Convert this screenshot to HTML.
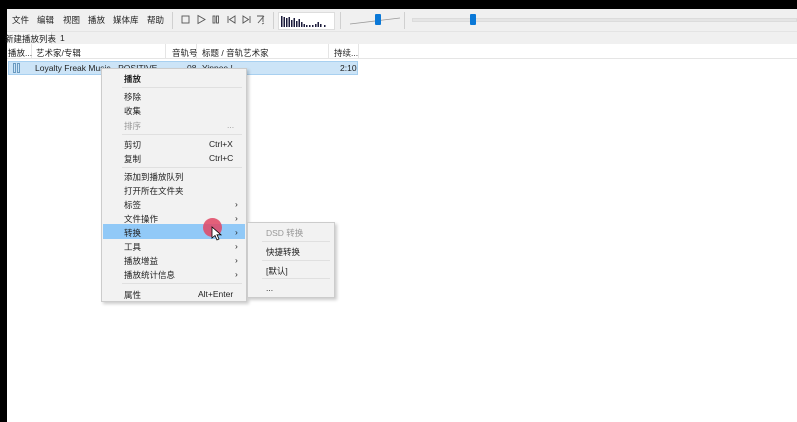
<!DOCTYPE html>
<html><head><meta charset="utf-8"><style>
*{margin:0;padding:0;box-sizing:border-box}
body{width:797px;height:422px;overflow:hidden;background:#fff;position:relative;font-family:"Liberation Sans","Noto Sans CJK SC",sans-serif;font-size:8.5px;color:#222}
.a{position:absolute;white-space:nowrap}
.sep{position:absolute;width:1px;background:#d0d0d0}
.mi{position:absolute;left:22px;font-size:8.5px}
.hl{position:absolute;height:1px;background:#e0e0e0}
</style></head><body>
<div class="a" style="left:0;top:0;width:797px;height:9px;background:#000"></div>
<div class="a" style="left:0;top:0;width:7px;height:422px;background:#000"></div>
<div class="a" style="left:7px;top:9px;width:790px;height:22px;background:#f0f0f0"></div>
<div class="a" style="left:7px;top:31px;width:790px;height:13px;background:#f0f0f0;border-top:1px solid #e4e4e4"></div>
<div class="a" style="left:12px;top:14px">文件</div>
<div class="a" style="left:37px;top:14px">编辑</div>
<div class="a" style="left:63px;top:14px">视图</div>
<div class="a" style="left:88px;top:14px">播放</div>
<div class="a" style="left:113px;top:14px">媒体库</div>
<div class="a" style="left:147px;top:14px">帮助</div>
<div class="sep" style="left:172px;top:12px;height:17px"></div>
<svg class="a" style="left:178px;top:12px" width="95" height="16" viewBox="0 0 95 16" fill="none" stroke="#555" stroke-width="0.9">
<rect x="4" y="4" width="7" height="7"/>
<path d="M20 3.5 L27 7.5 L20 11.5 Z"/>
<rect x="35" y="4" width="2" height="7"/><rect x="38.5" y="4" width="2" height="7"/>
<path d="M50 4 V11 M57 4 L51.5 7.5 L57 11 Z"/>
<path d="M72 4 V11 M65 4 L70.5 7.5 L65 11 Z"/>
<path d="M79 4 L85 4 L85 10 M80 11 L86 4 M84 12 l2 -1"/>
</svg>
<div class="sep" style="left:273px;top:12px;height:17px"></div>
<div class="a" style="left:278px;top:12px;width:57px;height:18px;background:#fff;border:1px solid #ddd"></div>
<svg class="a" style="left:281px;top:15px" width="52" height="13" viewBox="0 0 52 13" fill="#1a1a3a">
<rect x="0" y="1" width="1.5" height="11"/><rect x="2.5" y="2" width="1.5" height="10"/><rect x="5" y="3" width="1.5" height="9"/><rect x="7.5" y="2" width="1.5" height="10"/><rect x="10" y="5" width="1.5" height="7"/><rect x="12.5" y="3" width="1.5" height="9"/><rect x="15" y="6" width="1.5" height="6"/><rect x="17.5" y="4" width="1.5" height="8"/><rect x="20" y="7" width="1.5" height="5"/><rect x="22.5" y="9" width="1.5" height="3"/><rect x="25" y="10" width="1.5" height="2"/><rect x="28" y="10" width="1.5" height="2"/><rect x="31" y="10" width="1.5" height="2"/><rect x="34" y="9" width="1.5" height="3"/><rect x="36.5" y="7" width="1.5" height="5"/><rect x="39" y="9" width="1.5" height="3"/><rect x="43" y="10" width="1.5" height="2"/>
</svg>
<div class="sep" style="left:340px;top:12px;height:17px"></div>
<svg class="a" style="left:348px;top:12px" width="55" height="16"><path d="M2 12 L52 6" stroke="#999" stroke-width="0.8"/></svg>
<div class="a" style="left:375px;top:14px;width:6px;height:11px;background:#0a78d7;border-radius:1px"></div>
<div class="sep" style="left:404px;top:12px;height:17px"></div>
<div class="a" style="left:412px;top:18px;width:385px;height:4px;background:#e5e5e5;border:1px solid #dcdcdc"></div>
<div class="a" style="left:470px;top:14px;width:6px;height:11px;background:#0a78d7;border-radius:1px"></div>
<div class="a" style="left:7px;top:32px;width:45px;height:12px;background:#f7f7f7;border-right:1px solid #ddd"></div>
<div class="a" style="left:5px;top:33px">新建播放列表</div>
<div class="a" style="left:60px;top:33px">1</div>
<div class="a" style="left:7px;top:44px;width:790px;height:15px;background:#fff;border-bottom:1px solid #e5e5e5"></div>
<div class="sep" style="left:31px;top:44px;height:15px;background:#e5e5e5"></div>
<div class="sep" style="left:165px;top:44px;height:15px;background:#e5e5e5"></div>
<div class="sep" style="left:196px;top:44px;height:15px;background:#e5e5e5"></div>
<div class="sep" style="left:328px;top:44px;height:15px;background:#e5e5e5"></div>
<div class="sep" style="left:358px;top:44px;height:15px;background:#e5e5e5"></div>
<div class="a" style="left:8px;top:47px">播放...</div>
<div class="a" style="left:36px;top:47px">艺术家/专辑</div>
<div class="a" style="left:172px;top:47px">音轨号</div>
<div class="a" style="left:202px;top:47px">标题 / 音轨艺术家</div>
<div class="a" style="left:334px;top:47px">持续...</div>
<div class="a" style="left:8px;top:61px;width:350px;height:14px;background:#cce4f7;border:1px solid #a8d0f0"></div>
<div class="a" style="left:13px;top:63px;width:3px;height:10px;border:1px solid #6a9ac0"></div>
<div class="a" style="left:17px;top:63px;width:3px;height:10px;border:1px solid #6a9ac0"></div>
<div class="a" style="left:35px;top:63px">Loyalty Freak Music - POSITIVE</div>
<div class="a" style="left:187px;top:63px">08</div>
<div class="a" style="left:202px;top:63px">Yippee !</div>
<div class="a" style="left:340px;top:63px">2:10</div>

<div class="a" style="left:101px;top:68px;width:146px;height:234px;background:#f2f2f2;border:1px solid #ccc;box-shadow:2px 2px 3px rgba(0,0,0,.2)">
<div class="mi" style="top:4px;font-weight:bold">播放</div>
<div class="hl" style="left:20px;right:4px;top:18px"></div>
<div class="mi" style="top:22px">移除</div>
<div class="mi" style="top:36px">收集</div>
<div class="mi" style="top:51px;color:#999">排序</div><div class="a" style="left:125px;top:51px;color:#999">...</div>
<div class="hl" style="left:20px;right:4px;top:65px"></div>
<div class="mi" style="top:70px">剪切</div><div class="a" style="left:107px;top:70px">Ctrl+X</div>
<div class="mi" style="top:84px">复制</div><div class="a" style="left:107px;top:84px">Ctrl+C</div>
<div class="hl" style="left:20px;right:4px;top:98px"></div>
<div class="mi" style="top:102px">添加到播放队列</div>
<div class="mi" style="top:116px">打开所在文件夹</div>
<div class="mi" style="top:130px">标签</div><div class="a" style="left:133px;top:130px">›</div>
<div class="mi" style="top:144px">文件操作</div><div class="a" style="left:133px;top:144px">›</div>
<div class="a" style="left:1px;top:155px;width:142px;height:15px;background:#91c9f7"></div>
<div class="mi" style="top:158px">转换</div><div class="a" style="left:133px;top:158px">›</div>
<div class="mi" style="top:172px">工具</div><div class="a" style="left:133px;top:172px">›</div>
<div class="mi" style="top:186px">播放增益</div><div class="a" style="left:133px;top:186px">›</div>
<div class="mi" style="top:200px">播放统计信息</div><div class="a" style="left:133px;top:200px">›</div>
<div class="hl" style="left:20px;right:4px;top:214px"></div>
<div class="mi" style="top:220px">属性</div><div class="a" style="left:96px;top:220px">Alt+Enter</div>
</div>
<div class="a" style="left:203px;top:218px;width:19px;height:19px;border-radius:50%;background:rgba(225,70,100,.85)"></div>
<svg class="a" style="left:211px;top:226px" width="12" height="16"><path d="M1 1 L1 12 L4 9.5 L6 14 L8 13 L6 8.8 L10 8.8 Z" fill="#fff" stroke="#000" stroke-width="0.8"/></svg>

<div class="a" style="left:247px;top:222px;width:88px;height:76px;background:#f2f2f2;border:1px solid #ccc;box-shadow:2px 2px 3px rgba(0,0,0,.2)">
<div class="a" style="left:18px;top:4px;color:#999">DSD 转换</div>
<div class="hl" style="left:14px;right:4px;top:18px"></div>
<div class="a" style="left:18px;top:23px">快捷转换</div>
<div class="hl" style="left:14px;right:4px;top:37px"></div>
<div class="a" style="left:18px;top:42px">[默认]</div>
<div class="hl" style="left:14px;right:4px;top:55px"></div>
<div class="a" style="left:18px;top:60px">...</div>
</div>
</body></html>
